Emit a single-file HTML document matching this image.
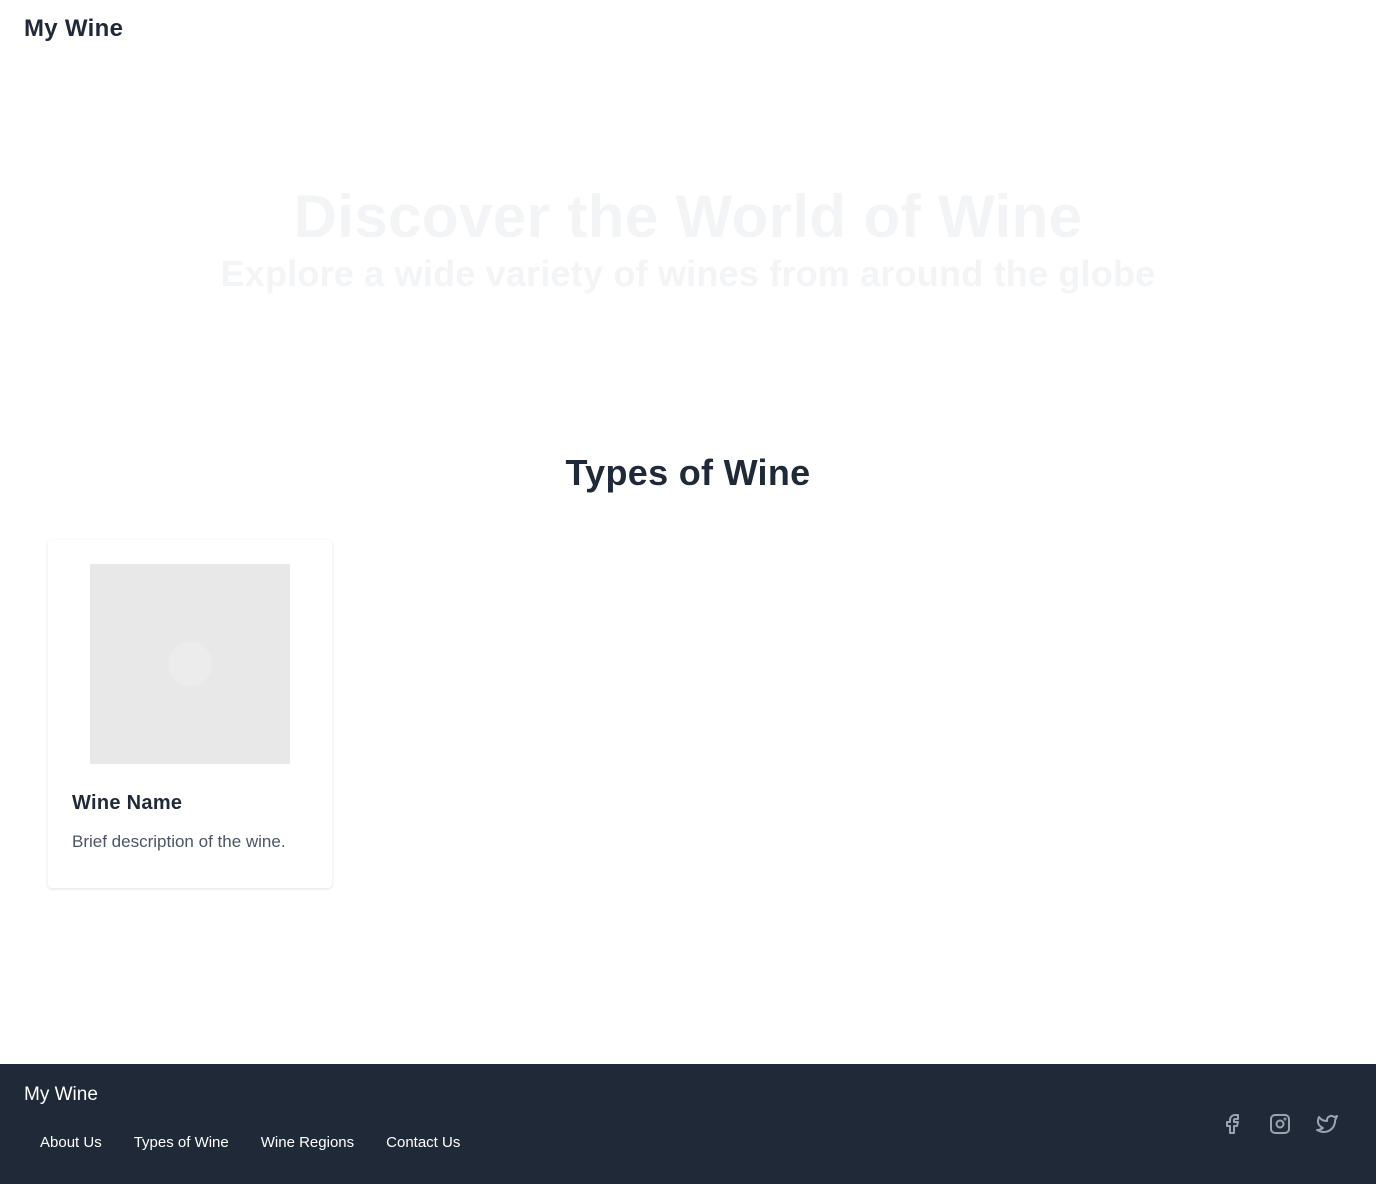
<!DOCTYPE html>
<html><head><meta charset="utf-8"><style>
*{box-sizing:border-box;margin:0;padding:0}
body{width:1376px;height:1184px;position:relative;background:#fff;font-family:"Liberation Sans",sans-serif;color:#1f2937;overflow:hidden}
.logo{position:absolute;left:24px;top:15px;font-size:24px;font-weight:bold;color:#1f2937;letter-spacing:.3px}
.h1{position:absolute;left:0;width:1376px;top:182px;text-align:center;font-size:60px;font-weight:bold;color:#f3f4f6;letter-spacing:.4px}
.h2{position:absolute;left:0;width:1376px;top:253px;text-align:center;font-size:36px;font-weight:bold;color:#f3f4f6;letter-spacing:.2px}
.types{position:absolute;left:0;width:1376px;top:452px;text-align:center;font-size:36px;font-weight:bold;color:#1f2937;letter-spacing:.3px}
.card{position:absolute;left:48px;top:540px;width:284px;height:348px;border-radius:4px;box-shadow:0 1px 3px rgba(0,0,0,.12);background:#fff}
.img{position:absolute;left:42px;top:24px;width:200px;height:200px;background:#e8e8e8}
.circ{position:absolute;left:78px;top:78px;width:44px;height:44px;border-radius:50%;background:#ececec}
.name{position:absolute;left:24px;top:252px;font-size:20px;font-weight:bold;letter-spacing:.3px}
.desc{position:absolute;left:24px;top:292px;font-size:17px;color:#4b5563}
footer{position:absolute;left:0;top:1064px;width:1376px;height:120px;background:#1f2937;color:#fff}
.fl{position:absolute;left:24px;top:20px;font-size:19px}
.links{position:absolute;left:40px;top:70px;font-size:15px;display:flex}
.links span{margin-right:32px}
.ic{position:absolute;top:48px}
</style></head><body>
<div class="logo">My Wine</div>
<div class="h1">Discover the World of Wine</div>
<div class="h2">Explore a wide variety of wines from around the globe</div>
<div class="types">Types of Wine</div>
<div class="card"><div class="img"><div class="circ"></div></div>
<div class="name">Wine Name</div><div class="desc">Brief description of the wine.</div></div>
<footer><div class="fl">My Wine</div>
<div class="links"><span>About Us</span><span>Types of Wine</span><span>Wine Regions</span><span>Contact Us</span></div>
<svg class="ic" style="left:1220px" width="24" height="24" viewBox="0 0 24 24" fill="none" stroke="#9ca3af" stroke-width="2" stroke-linejoin="round"><path d="M7 10v4h3v7h4v-7h3l1-4h-4V8a1 1 0 0 1 1-1h3V3h-3a5 5 0 0 0-5 5v2H7z"/></svg>
<svg class="ic" style="left:1268px" width="24" height="24" viewBox="0 0 24 24" fill="none" stroke="#9ca3af" stroke-width="2"><rect x="3" y="3" width="18" height="18" rx="4"/><circle cx="12" cy="12" r="3.5"/><circle cx="17" cy="7" r=".5"/></svg>
<svg class="ic" style="left:1315px" width="24" height="24" viewBox="0 0 24 24" fill="none" stroke="#9ca3af" stroke-width="2" stroke-linejoin="round"><path d="M22 4.01c-1 .49-1.98.69-3 .99-1.12-1.26-2.78-1.33-4.38-.73S11.99 6.350 12 8.01v1c-3.25.08-6.14-1.4-8-4 0 0-4.19 7.44 4 11-1.87 1.25-3.74 2.09-6 2 3.3 1.8 6.9 2.42 10.01 1.52 3.57-1.04 6.5-3.7 7.62-7.7.34-1.2.5-2.45.49-3.7 0-.25 1.51-2.77 1.88-4.12z"/></svg>
</footer>
</body></html>
